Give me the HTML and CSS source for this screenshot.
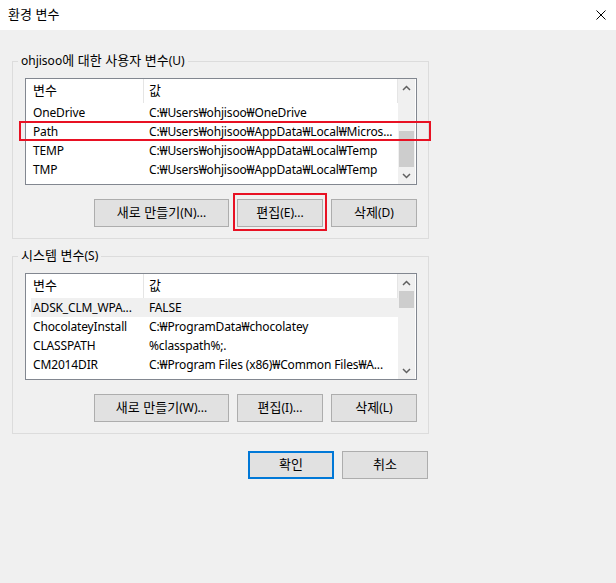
FILE: index.html
```html
<!DOCTYPE html>
<html lang="ko">
<head>
<meta charset="utf-8">
<title>환경 변수</title>
<link rel="stylesheet" href="styles.css">
</head>
<body>
<div class="window">
  <header class="titlebar">
    <span class="title"><span class="ko">환경 변수</span></span>
    <svg class="close" viewBox="0 0 10 10" width="10" height="10"><path d="M0.5 0.5 L9.5 9.5 M9.5 0.5 L0.5 9.5" stroke="#000" stroke-width="1" fill="none"/></svg>
  </header>
  <main class="content">
    <fieldset class="group">
      <legend>ohjisoo<span class="ko">에 대한 사용자 변수</span>(U)</legend>
      <div class="list">
        <div class="list-main">
          <div class="list-head"><div class="hcell c1"><span class="ko">변수</span></div><div class="hcell c2"><span class="ko">값</span></div></div>
          <div class="row"><span class="c1">OneDrive</span><span class="c2">C:₩Users₩ohjisoo₩OneDrive</span></div>
          <div class="row marked"><span class="c1">Path</span><span class="c2">C:₩Users₩ohjisoo₩AppData₩Local₩Micros...</span></div>
          <div class="row"><span class="c1">TEMP</span><span class="c2">C:₩Users₩ohjisoo₩AppData₩Local₩Temp</span></div>
          <div class="row"><span class="c1">TMP</span><span class="c2">C:₩Users₩ohjisoo₩AppData₩Local₩Temp</span></div>
        </div>
        <div class="scrollbar">
          <div class="arrow"><svg viewBox="0 0 9 6" width="9" height="6"><path d="M1 5 L4.5 1.5 L8 5" stroke="#606060" stroke-width="1.5" fill="none"/></svg></div>
          <div class="track track-end"><div class="thumb thumb-user"></div></div>
          <div class="arrow"><svg viewBox="0 0 9 6" width="9" height="6"><path d="M1 1 L4.5 4.5 L8 1" stroke="#606060" stroke-width="1.5" fill="none"/></svg></div>
        </div>
      </div>
      <div class="btn-row">
        <button class="btn btn-wide"><span class="ko">새로 만들기</span>(N)...</button>
        <span class="mark-box"><button class="btn"><span class="ko">편집</span>(E)...</button></span>
        <button class="btn"><span class="ko">삭제</span>(D)</button>
      </div>
    </fieldset>

    <fieldset class="group group-system">
      <legend><span class="ko">시스템 변수</span>(S)</legend>
      <div class="list">
        <div class="list-main">
          <div class="list-head"><div class="hcell c1"><span class="ko">변수</span></div><div class="hcell c2"><span class="ko">값</span></div></div>
          <div class="row selected"><span class="c1">ADSK_CLM_WPA...</span><span class="c2">FALSE</span></div>
          <div class="row"><span class="c1">ChocolateyInstall</span><span class="c2">C:₩ProgramData₩chocolatey</span></div>
          <div class="row"><span class="c1">CLASSPATH</span><span class="c2">%classpath%;.</span></div>
          <div class="row"><span class="c1">CM2014DIR</span><span class="c2">C:₩Program Files (x86)₩Common Files₩A...</span></div>
        </div>
        <div class="scrollbar">
          <div class="arrow"><svg viewBox="0 0 9 6" width="9" height="6"><path d="M1 5 L4.5 1.5 L8 5" stroke="#606060" stroke-width="1.5" fill="none"/></svg></div>
          <div class="track"><div class="thumb thumb-system"></div></div>
          <div class="arrow"><svg viewBox="0 0 9 6" width="9" height="6"><path d="M1 1 L4.5 4.5 L8 1" stroke="#606060" stroke-width="1.5" fill="none"/></svg></div>
        </div>
      </div>
      <div class="btn-row">
        <button class="btn btn-wide"><span class="ko">새로 만들기</span>(W)...</button>
        <button class="btn"><span class="ko">편집</span>(I)...</button>
        <button class="btn"><span class="ko">삭제</span>(L)</button>
      </div>
    </fieldset>

    <div class="dialog-btns">
      <button class="btn btn-default"><span class="ko">확인</span></button>
      <button class="btn"><span class="ko">취소</span></button>
    </div>
  </main>
</div>
</body>
</html>
```

FILE: styles.css
```css
html, body {
  margin: 0;
  padding: 0;
}

body {
  background: #f0f0f0;
  font-family: "Noto Sans", "Noto Sans CJK KR", sans-serif;
  font-size: 12px;
  color: #000;
}

.ko {
  font-family: "Noto Sans CJK KR", sans-serif;
  font-size: 13px;
  line-height: 1;
}

.titlebar {
  height: 30px;
  background: #fff;
  display: flex;
  align-items: center;
  justify-content: space-between;
  padding: 0 10px 0 8px;
  box-sizing: border-box;
}

.title {
  line-height: 16px;
}

.close {
  display: block;
  margin-top: -1px;
}

.content {
  width: 417px;
  padding-left: 12px;
}

.group {
  margin: 23px 0 0;
  padding: 9px 11px 11px 12px;
  border: 1px solid #dcdcdc;
  min-width: 0;
}

.group-system {
  margin-top: 9px;
}

.group legend {
  padding: 0 3px;
  margin-left: -7px;
  line-height: 16px;
  height: 16px;
}

.list {
  display: flex;
  height: 107px;
  box-sizing: border-box;
  border: 1px solid #828790;
  background: #fff;
}

.list-main {
  width: 372px;
  flex: none;
}

.list-head {
  display: flex;
  height: 24px;
}

.hcell {
  line-height: 24px;
  box-sizing: border-box;
  border-right: 1px solid #e5e5e5;
}

.hcell.c1 {
  width: 118px;
  padding-left: 7px;
}

.hcell.c2 {
  width: 254px;
  padding-left: 5px;
}

.row {
  display: flex;
  height: 19px;
  line-height: 19px;
  margin-left: 5px;
  white-space: nowrap;
  letter-spacing: -0.15px;
}

.row .c1 {
  width: 112px;
  flex: none;
  padding-left: 2px;
  box-sizing: border-box;
  overflow: hidden;
}

.row .c2 {
  padding-left: 6px;
}

.row.selected {
  background: #f0f0f0;
}

.row.marked {
  position: relative;
}

.row.marked::after {
  content: "";
  position: absolute;
  left: -12px;
  right: -33px;
  top: -1px;
  bottom: 0;
  border: 2px solid #e81123;
}

.scrollbar {
  width: 17px;
  flex: none;
  background: #f0f0f0;
  display: flex;
  flex-direction: column;
}

.arrow {
  height: 17px;
  flex: none;
  display: flex;
  align-items: center;
  justify-content: center;
}

.arrow svg {
  display: block;
}

.track {
  flex: 1;
  display: flex;
  flex-direction: column;
}

.track-end {
  justify-content: flex-end;
}

.thumb {
  background: #cdcdcd;
  margin: 0 1px;
}

.thumb-user {
  height: 36px;
}

.thumb-system {
  height: 17px;
}

.btn-row {
  display: flex;
  justify-content: flex-end;
  gap: 8px;
  margin-top: 14px;
}

.btn {
  font: inherit;
  color: #000;
  background: #e1e1e1;
  border: 1px solid #adadad;
  height: 28px;
  width: 86px;
  padding: 0;
  margin: 0;
  box-sizing: border-box;
  line-height: 16px;
}

.btn-wide {
  width: 135px;
}

.btn-default {
  border: 2px solid #0078d7;
}

.mark-box {
  position: relative;
  display: flex;
}

.mark-box::after {
  content: "";
  position: absolute;
  top: -6px;
  left: -4px;
  right: -4px;
  bottom: -4px;
  border: 2px solid #e81123;
}

.dialog-btns {
  display: flex;
  justify-content: flex-end;
  gap: 8px;
  margin-top: 17px;
  padding-right: 1px;
}
```
